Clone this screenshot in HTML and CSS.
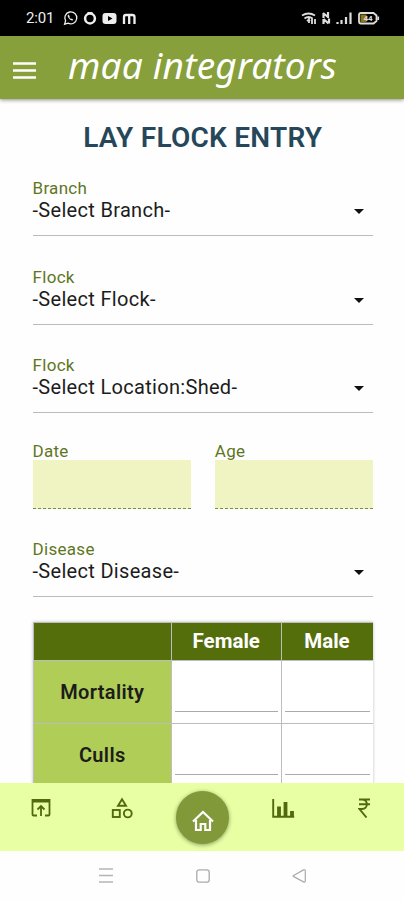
FILE: index.html
```html
<!DOCTYPE html>
<html lang="en">
<head>
<meta charset="utf-8">
<title>Lay Flock Entry</title>
<link rel="stylesheet" href="styles.css">
</head>
<body>
<div class="status">
  <span class="clock">2:01</span>
  <svg class="apps" width="76" height="16" viewBox="0 0 76 16" fill="none" stroke="#eee">
    <path d="M1.6 14.2l1-3.3A6 6 0 1 1 5 13.2z" stroke-width="1.3"/>
    <path d="M5.2 4.600c-1 1-.4 2.700 1 4.200s3.300 2.100 4.200 1.100l-1.500-1.500-1 .6L6.300 7.300l.5-1z" fill="#eee" stroke="none"/>
    <circle cx="27" cy="8.500" r="4.900" stroke-width="2.500"/>
    <path d="M24.500 3h5" stroke-width="2"/>
    <rect x="39.500" y="3" width="14" height="11" rx="3" fill="#eee" stroke="none"/>
    <path d="M45 6l4.500 2.500L45 11z" fill="#000" stroke="none"/>
    <path d="M61 14V7q0-2 1.800-2h6.400q2.300 0 2.300 2v7M66.200 5v9" stroke-width="2.300"/>
  </svg>
  <svg class="signals" width="80" height="16" viewBox="0 0 80 16" fill="none" stroke="#ddd">
    <path d="M1 5.500q6.500-4 13 0M3.500 8.500q4-3 8 0M6 11q1.500-1.500 3 0M8 8v5M11 8v6M14 9v5" stroke-width="1.800"/>
    <path d="M22.500 3v5M27 2v6M22.500 9v5M28 8.500v5M22 3l5 4M22.500 9l5 4.500" stroke-width="2.200"/>
    <path d="M36.500 12v2M40.500 10v4M45 7v7M49.500 2.500V14" stroke-width="2.200"/>
    <path d="M60 3h12.500l3 2.500v5.500l-3 2.500H60q-2 0-2-2V5q0-2 2-2z" stroke-width="1.800"/>
    <rect x="59.500" y="4.500" width="6" height="7.500" fill="#8a7418" stroke="none"/>
    <path d="M77.200 6.500v3.500" stroke-width="1.800"/>
    <text x="62.500" y="11.300" class="charge">44</text>
  </svg>
</div>
<header class="appbar">
  <svg width="23" height="17" viewBox="0 0 23 17"><path d="M0 1.500h23M0 8.500h23M0 15.500h23" stroke="#fff" stroke-width="2.400"/></svg>
  <span class="brand">maa integrators</span>
</header>
<main class="content">
  <h1>LAY FLOCK ENTRY</h1>
  <div class="field"><label>Branch</label><div class="select"><span>-Select Branch-</span><i class="caret"></i></div></div>
  <div class="field"><label>Flock</label><div class="select"><span>-Select Flock-</span><i class="caret"></i></div></div>
  <div class="field"><label>Flock</label><div class="select"><span>-Select Location:Shed-</span><i class="caret"></i></div></div>
  <div class="pair">
    <div><label>Date</label><div class="box"></div></div>
    <div><label>Age</label><div class="box"></div></div>
  </div>
  <div class="field"><label>Disease</label><div class="select"><span>-Select Disease-</span><i class="caret"></i></div></div>
  <div class="grid">
    <div class="head"></div><div class="head">Female</div><div class="head">Male</div>
    <div class="name">Mortality</div><div class="cell"></div><div class="cell"></div>
    <div class="name">Culls</div><div class="cell"></div><div class="cell"></div>
  </div>
</main>
<nav class="tabs">
  <div class="tab"><svg width="20" height="20" viewBox="0 0 20 20" fill="none" stroke="#52690c" stroke-width="1.800"><path d="M6 17.500H2.500q-1 0-1-1V2h17v14.500q0 1-1 1H14"/><path d="M1 3h18" stroke-width="3"/><path d="M10 18V8.500M6.500 11.500L10 8l3.500 3.500"/></svg></div>
  <div class="tab"><svg width="22" height="22" viewBox="0 0 22 22" fill="none" stroke="#52690c" stroke-width="1.900"><path d="M11 2.200L15 8.700H7z"/><rect x="1.800" y="13" width="7" height="7"/><circle cx="16.800" cy="16.500" r="3.900"/></svg></div>
  <div class="home"><svg width="24" height="24" viewBox="0 0 24 24" fill="none" stroke="#fff" stroke-width="2.200"><path d="M2 12.500L12 3l10 9.500M5 11v10h4.700v-6h4.600v6H19V11"/></svg></div>
  <div class="tab"><svg width="23" height="20" viewBox="0 0 23 20" fill="none" stroke="#52690c"><path d="M1.200 1v17.800h21" stroke-width="1.900"/><path d="M7 8.500V19M13.500 4V19M20 13v6" stroke-width="3.800"/></svg></div>
  <div class="tab"><svg width="13" height="20" viewBox="0 0 13 20" fill="none" stroke="#52690c" stroke-width="1.900"><path d="M1 1.500h11M1 6.300h11M1 1.500h3c6.500 0 6.500 9.500 0 9.500H1.500l7 8.500"/></svg></div>
</nav>
<div class="system">
  <svg width="14" height="15" viewBox="0 0 14 15"><path d="M0 1h14M0 7.500h14M0 14h14" stroke="#b5b5b5" stroke-width="1.300"/></svg>
  <svg width="14" height="14" viewBox="0 0 14 14"><rect x=".8" y=".8" width="12.400" height="12.400" rx="2.500" fill="none" stroke="#aaa" stroke-width="1.300"/></svg>
  <svg width="15" height="14" viewBox="0 0 15 14"><path d="M1.200 6.700L11.500.9q1.800-.6 1.800 1v10q0 1.700-1.800 1L1.200 7.300z" fill="none" stroke="#aaa" stroke-width="1.200"/></svg>
</div>
</body>
</html>
```
FILE: styles.css
```css
* { box-sizing: border-box; }
body { margin: 0; width: 404px; height: 900px; overflow: hidden; display: flex; flex-direction: column; background: #fefefe; font-family: Roboto, sans-serif; color: #1c1c1c; }
.status { height: 36px; flex: none; background: #000; color: #eee; display: flex; align-items: center; padding: 0 23px 0 26px; }
.clock { font-size: 15px; width: 37px; letter-spacing: -.2px; }
.signals { margin-left: auto; }
.charge { font: bold 8px Roboto, sans-serif; fill: #ddd; stroke: none; }
.appbar { height: 63px; flex: none; background: #87a03b; display: flex; align-items: center; padding: 6px 0 0 13px; box-shadow: 0 1px 4px rgba(0,0,0,.45); z-index: 1; }
.brand { margin: -11px 0 0 32px; font: italic 37px/44px "Noto Sans", sans-serif; color: #fff; white-space: nowrap; letter-spacing: .2px; }
.content { height: 684px; flex: none; overflow: hidden; padding: 0 31px 0 32.500px; }
h1 { margin: 0; height: 79px; font-size: 28px; line-height: 77px; font-weight: 600; text-align: center; color: #264759; letter-spacing: .25px; }
label { display: block; height: 20px; font-size: 17px; line-height: 20px; color: #5e761e; letter-spacing: .3px; }
.field { height: 58px; margin-bottom: 30.500px; border-bottom: 1.500px solid #bbb; }
.select { height: 24px; display: flex; align-items: center; justify-content: space-between; padding-right: 9px; font-size: 20px; line-height: 24px; letter-spacing: .31px; white-space: nowrap; }
.caret { border: 5px solid transparent; border-top-color: #111; border-bottom: 0; margin-top: 3px; }
.pair { display: grid; grid-template-columns: 1fr 1fr; gap: 24px; margin: -3px 0 30px; }
.pair label { height: 19px; }
.box { height: 49px; background: #eff4c2; border-bottom: 1px dashed #7b8954; }
.pair + .field { margin-bottom: 25px; }
.grid { display: grid; grid-template-columns: 137.500px 108.500px 91px; grid-template-rows: 37.500px 62px 62px; gap: 1px; padding: 1px; background: #bdbdbd; box-shadow: 0 0 3px rgba(0,0,0,.25); font-size: 20px; font-weight: 600; }
.head, .name { display: flex; align-items: center; justify-content: center; }
.head { background: #556e0c; color: #fff; font-size: 20.500px; font-weight: 700; }
.name { background: #b0cd58; letter-spacing: .35px; }
.cell { background: #fff; padding: 0 3px 11px; display: flex; }
.cell::after { content: ""; flex: 1; border-bottom: 1px solid #aaa; }
.tabs { height: 68px; flex: none; background: #e8ffa3; display: grid; grid-template-columns: repeat(5, 81px); align-items: start; justify-content: center; justify-items: center; padding-left: 1px; }
.tab { height: 50px; display: flex; align-items: center; }
.home { width: 53px; height: 53px; margin-top: 8px; border-radius: 50%; background: #82993a; display: flex; align-items: center; justify-content: center; padding-top: 6px; box-shadow: 0 1px 4px rgba(0,0,0,.4); }
.system { height: 49px; flex: none; display: flex; justify-content: center; align-items: center; gap: 82.500px; padding-left: 2px; }
```
